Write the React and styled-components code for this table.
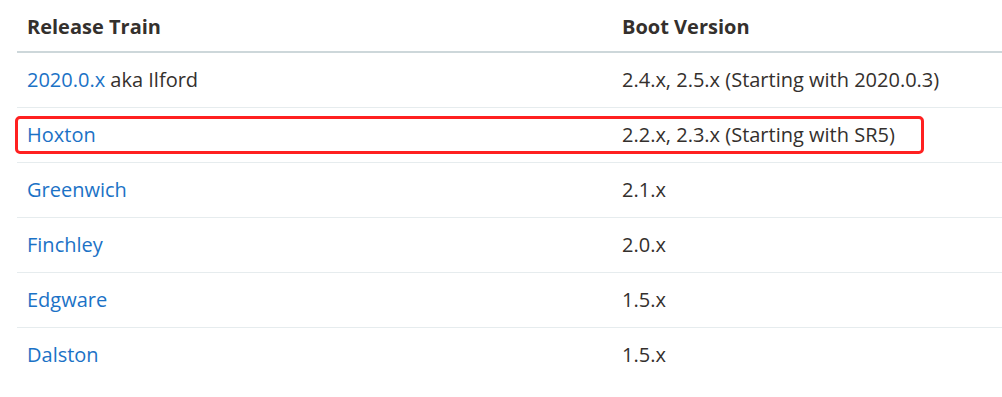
import React from "react";
import styled, { createGlobalStyle } from "styled-components";

const Global = createGlobalStyle`
  html, body { margin: 0; padding: 0; background: #fff; }
  body { font-family: "Open Sans", "Noto Sans", sans-serif; color: #34302d; overflow: hidden; }
`;

const Wrap = styled.div`
  padding-left: 17px;
  width: 100%;
  box-sizing: border-box;
`;

const Table = styled.table`
  border-collapse: collapse;
  width: 100%;
  font-size: 20px;
`;

const Th = styled.th`
  text-align: left;
  font-weight: 700;
  height: 52px;
  padding: 2px 10px 0;
  border-bottom: 2px solid #cdd7da;
  vertical-align: middle;
  width: ${(p) => p.$w || "auto"};
  box-sizing: border-box;
`;

const Tr = styled.tr`
  border-bottom: ${(p) => (p.$last ? "none" : "1px solid #e6ecee")};
`;

const Td = styled.td`
  height: 52px;
  padding: 0 10px 2px;
  vertical-align: middle;
  position: relative;
  white-space: nowrap;
`;

const Link = styled.a`
  color: #1b72c6;
  text-decoration: none;
`;

const Highlight = styled.div`
  position: absolute;
  left: -2px;
  top: 8px;
  width: 909px;
  height: 38px;
  border: 3px solid #ff2020;
  border-radius: 5px;
  box-sizing: border-box;
  pointer-events: none;
`;

const rows = [
  { train: "2020.0.x", suffix: " aka Ilford", boot: "2.4.x, 2.5.x (Starting with 2020.0.3)" },
  { train: "Hoxton", boot: "2.2.x, 2.3.x (Starting with SR5)", hl: true },
  { train: "Greenwich", boot: "2.1.x" },
  { train: "Finchley", boot: "2.0.x" },
  { train: "Edgware", boot: "1.5.x" },
  { train: "Dalston", boot: "1.5.x" },
];

export default function App() {
  return (
    <>
      <Global />
      <Wrap>
        <Table>
          <thead>
            <tr>
              <Th $w="595px">Release Train</Th>
              <Th>Boot Version</Th>
            </tr>
          </thead>
          <tbody>
            {rows.map((r, i) => (
              <Tr key={r.train} $last={i === rows.length - 1}>
                <Td>
                  {r.hl && <Highlight />}
                  <Link href="#">{r.train}</Link>
                  {r.suffix}
                </Td>
                <Td>{r.boot}</Td>
              </Tr>
            ))}
          </tbody>
        </Table>
      </Wrap>
    </>
  );
}
